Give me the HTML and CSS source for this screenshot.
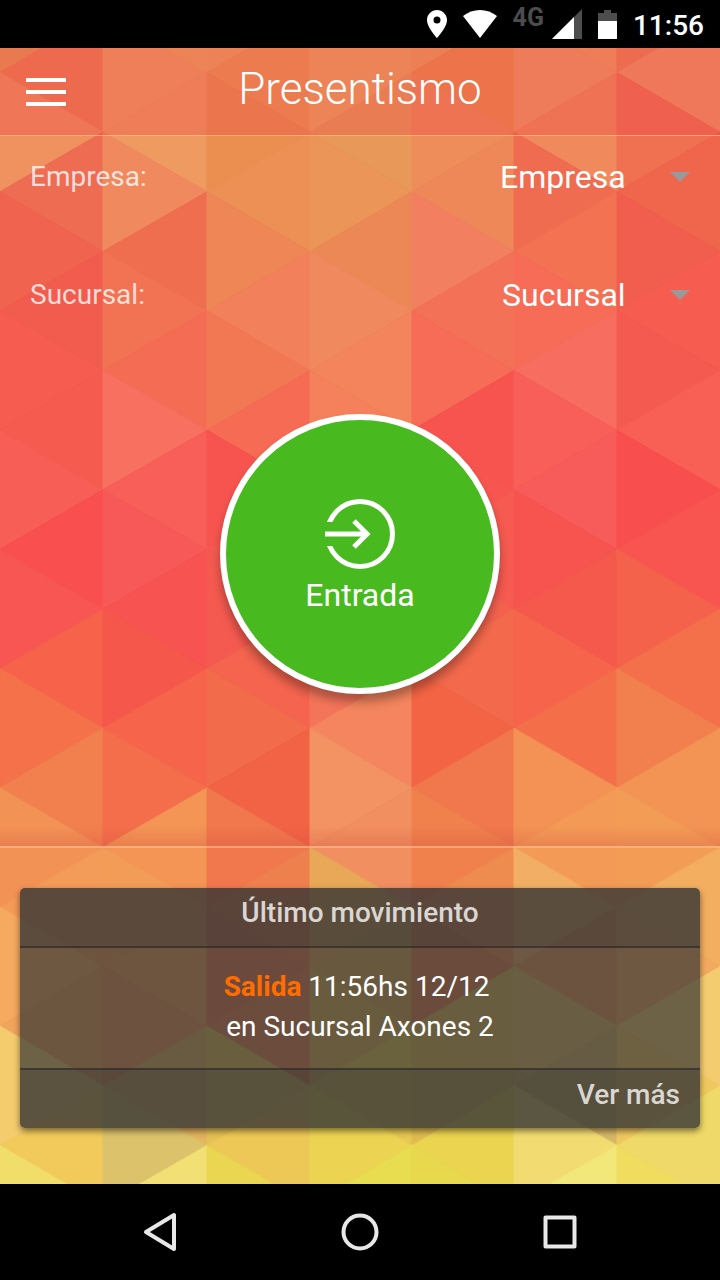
FILE: index.html
```html
<!DOCTYPE html>
<html lang="es">
<head>
  <meta charset="UTF-8">
  <meta name="viewport" content="width=device-width, initial-scale=1.0">
  <title>Presentismo</title>
  <link rel="stylesheet" href="styles.css">
</head>
<body>
  <div class="status-bar">
    <svg width="20" height="28" viewBox="0 0 20 28">
      <path fill="#fff" fill-rule="evenodd" d="M10 0C4.500 0 0 4.500 0 10c0 7.500 10 18 10 18s10-10.500 10-18C20 4.500 15.500 0 10 0zm0 6.500a3.500 3.500 0 1 1 0 7 3.500 3.500 0 0 1 0-7z"/>
    </svg>
    <svg width="34" height="28" viewBox="0 0 34 28">
      <path fill="#fff" d="M17 28L0 6C5 2 11 0 17 0s12 2 17 6z"/>
    </svg>
    <div class="signal">
      <span class="network">4G</span>
      <svg width="30" height="30" viewBox="0 0 30 30">
        <path fill="#4d4d4d" d="M30 0v30H0z"/>
        <path fill="#fff" d="M22 8v22H0z"/>
      </svg>
    </div>
    <svg width="19" height="29" viewBox="0 0 19 29">
      <path fill="#4d4d4d" d="M6 0h7v3h6v9H0V3h6z"/>
      <path fill="#fff" d="M0 11h19v18H0z"/>
    </svg>
    <span class="clock">11:56</span>
  </div>

  <div class="screen">
    <svg class="mosaic" id="mosaic" viewBox="0 48 720 1136" preserveAspectRatio="none" aria-hidden="true"></svg>

    <header class="toolbar">
      <button class="menu-btn" aria-label="Menú">
        <svg width="40" height="28" viewBox="0 0 40 28">
          <path fill="#fff" d="M0 0h40v4H0zM0 12h40v4H0zM0 24h40v4H0z"/>
        </svg>
      </button>
      <h1>Presentismo</h1>
    </header>

    <main class="content">
      <div class="fields">
        <div class="field">
          <label for="empresa">Empresa:</label>
          <div class="picker">
            <select id="empresa"><option>Empresa</option></select>
            <span class="arrow"></span>
          </div>
        </div>
        <div class="field">
          <label for="sucursal">Sucursal:</label>
          <div class="picker">
            <select id="sucursal"><option>Sucursal</option></select>
            <span class="arrow"></span>
          </div>
        </div>
      </div>

      <button class="entry-btn">
        <svg width="70" height="70" viewBox="0 0 70 70" fill="none" stroke="#fff" stroke-width="5">
          <clipPath id="ring"><path d="M0 0h70v70H0V47h14V23H0z"/></clipPath>
          <circle cx="35" cy="35" r="32.500" clip-path="url(#ring)"/>
          <path d="M0 35h42M29 22l13 13-13 13"/>
        </svg>
        <span>Entrada</span>
      </button>
    </main>

    <section class="bottom">
      <div class="card">
        <h2 class="card-title">Último movimiento</h2>
        <p class="card-body"><strong>Salida</strong> 11:56hs 12/12&nbsp;<br>en Sucursal Axones 2</p>
        <div class="card-footer"><a href="#">Ver más</a></div>
      </div>
    </section>
  </div>

  <nav class="nav-bar">
    <button aria-label="Atrás">
      <svg width="40" height="40" viewBox="0 0 40 40" fill="none" stroke="#e8e8e8" stroke-width="4" stroke-linejoin="round">
        <path d="M34 3v34L6 20z"/>
      </svg>
    </button>
    <button aria-label="Inicio">
      <svg width="40" height="40" viewBox="0 0 40 40" fill="none" stroke="#e8e8e8" stroke-width="4">
        <circle cx="20" cy="20" r="16.500"/>
      </svg>
    </button>
    <button aria-label="Recientes">
      <svg width="40" height="40" viewBox="0 0 40 40" fill="none" stroke="#e8e8e8" stroke-width="4" stroke-linejoin="round">
        <path d="M5.500 5.500h29v29h-29z"/>
      </svg>
    </button>
  </nav>

  <script src="mosaic.js"></script>
</body>
</html>
```

FILE: styles.css
```css
* {
  box-sizing: border-box;
}
body {
  margin: 0;
  min-height: 100vh;
  display: flex;
  flex-direction: column;
  font-family: Roboto, "Noto Sans", sans-serif;
  color: #fff;
  background: #000;
}
button {
  border: none;
  padding: 0;
  background: none;
  color: inherit;
  font-family: inherit;
  cursor: pointer;
}
svg {
  display: block;
}

/* status bar */
.status-bar {
  height: 48px;
  display: flex;
  align-items: center;
  justify-content: flex-end;
  gap: 16px;
  padding: 0 16px;
}
.signal {
  display: flex;
  align-items: center;
  gap: 8px;
}
.network {
  align-self: flex-start;
  font-size: 25px;
  line-height: 18px;
  font-weight: 700;
  color: #4d4d4d;
}
.clock {
  padding-top: 3px;
  font-size: 28px;
  line-height: 45px;
  font-weight: 500;
}

/* screen */
.screen {
  flex: 1;
  display: flex;
  flex-direction: column;
  position: relative;
  z-index: 0;
}
.mosaic {
  position: absolute;
  top: 0;
  left: 0;
  width: 100%;
  height: 100%;
  z-index: -1;
}
.toolbar {
  height: 88px;
  display: grid;
  grid-template-columns: 92px 1fr 92px;
  background: rgba(240, 61, 70, 0.3);
  border-bottom: 1px solid rgba(255, 210, 140, 0.6);
}
.menu-btn {
  display: flex;
  align-items: center;
  padding-left: 26px;
}
h1 {
  margin: 0;
  font-size: 44px;
  line-height: 82px;
  font-weight: 300;
  text-align: center;
}
.content {
  flex: 1;
  display: flex;
  flex-direction: column;
  align-items: center;
  background: linear-gradient(to top, rgba(200, 70, 60, 0.25), rgba(200, 70, 60, 0) 20px);
}
.fields {
  align-self: stretch;
  display: flex;
  flex-direction: column;
  gap: 36px;
  padding: 0 30px;
}
.field {
  height: 82px;
  display: flex;
  align-items: center;
  justify-content: space-between;
}
label {
  padding-bottom: 2px;
  font-size: 28px;
  color: rgba(255, 255, 255, 0.78);
}
.picker {
  display: grid;
  align-items: center;
}
.picker select, .arrow {
  grid-area: 1 / 1;
}
.picker select {
  appearance: none;
  border: none;
  background: none;
  color: #fff;
  font-family: inherit;
  font-size: 32px;
  line-height: 48px;
  padding: 0 64px 0 0;
}
.picker option {
  color: #333;
}
.arrow {
  justify-self: end;
  border: 10px solid transparent;
  border-top-color: #999;
  border-bottom: none;
  pointer-events: none;
}
.entry-btn {
  width: 280px;
  height: 280px;
  margin: 78px 0;
  padding-top: 4px;
  display: flex;
  flex-direction: column;
  align-items: center;
  justify-content: center;
  gap: 8px;
  border: 6px solid #fff;
  border-radius: 50%;
  background: #48ba20;
  font-size: 32px;
  line-height: 36px;
  box-shadow: 0 8px 10px rgba(0, 0, 0, 0.3);
}

/* last movement */
.bottom {
  padding: 40px 20px 56px;
  border-top: 2px solid rgba(255, 190, 150, 0.6);
}
.card {
  border-radius: 5px;
  overflow: hidden;
  text-align: center;
  font-size: 28px;
  box-shadow: 0 3px 6px rgba(0, 0, 0, 0.5);
}
.card-title, .card-footer {
  margin: 0;
  padding: 0 20px 8px;
  line-height: 50px;
  font-size: 28px;
  font-weight: 500;
  color: #dad6d2;
  background: rgba(52, 52, 52, 0.8);
}
.card-body {
  margin: 0;
  padding: 19px 20px 21px;
  line-height: 40px;
  background: rgba(52, 52, 52, 0.7);
  background-clip: padding-box;
  border: solid rgba(45, 45, 42, 0.92);
  border-width: 2px 0;
}
.card-body strong {
  color: #ff6d00;
}
.card-footer {
  text-align: right;
}
.card-footer a {
  color: inherit;
  text-decoration: none;
}

/* android navigation */
.nav-bar {
  height: 96px;
  display: grid;
  grid-template-columns: repeat(3, 1fr);
  padding: 0 60px;
}
.nav-bar button {
  display: flex;
  align-items: center;
  justify-content: center;
}
```

FILE: mosaic.js
```js
// one row per triangle level, one colour per column
const rows = [
  "e79654 eda460 eca15d eda461 eb9d59 ee9a60 ed8154",
  "ed7f54 f09d60 eb9754 eda460 eb8c4c ee9763 ef9263",
  "f09160 ee9a60 ea8f50 e8995a ee8c5a f08a5c f07052",
  "ee6c52 f08a5e ec9056 eb9558 ee8858 f06c50 f0664c",
  "f0634e ef6e50 ee8656 ec8856 f28060 f27252 f15e4e",
  "f25c4e f27353 f2805a f1895f f37257 f66c56 f65c50",
  "f75c50 f56c55 f27854 f3845c f66c56 f76e60 f55a50",
  "f65b4f f77060 f66b54 f5805c f7544f f85f58 f86055",
  "f75e56 f85f59 f7544f f96a56 f75650 f75c5a f84f4e",
  "f94f4e f75959 f75a50 f8624f f65a50 f75450 f85550",
  "f75652 f75350 f55a50 f4684f f4624f f5594b f5624b",
  "f6624a f6574b f4644e f4745a f3694c f5644b f4704a",
  "f5714a f5644b f26b4a f4855e f26444 f46e4a f2804e",
  "f2804e f46e4b f26244 f39262 f0784c f39254 f39354",
  "f39255 f49455 f1774d f28f60 f0804c f39a56 f39c56",
  "f39b58 f39c58 ee804e e9a858 ee8c50 f2ae64 f3ae60",
  "f5aa60 f3a05c ec7850 e0ac54 ec844e ee9c58 f3aa60",
  "f0a45c ee9858 ea8452 e0b456 e0bc56 e4c064 f4cc70",
  "f4cc6e e4b45e e4c056 e6c852 e0bc50 d8b866 f0c860",
  "f2ca5c dcc26a eec857 ecd452 ead450 f2dc72 efd968",
  "f0dd6a f2e074 ead650 e8dc50 e8d84e f2e87a f0dd60"
];

const colX = [0, 103, 207, 310, 412, 514, 617, 720];
const levelY = level => 13 + 59.6 * level;

let shapes = "";
rows.forEach((row, level) => {
  row.split(" ").forEach((color, col) => {
    // the tip points to the side whose grid line has a vertex at this level
    const tipLeft = (level + col) % 2 === 1;
    const tip = tipLeft ? colX[col] : colX[col + 1];
    const base = tipLeft ? colX[col + 1] : colX[col];
    shapes += `<polygon points="${tip},${levelY(level)} ${base},${levelY(level - 1)} ${base},${levelY(level + 1)}" fill="#${color}" stroke="#${color}"/>`;
  });
});
document.getElementById("mosaic").innerHTML = shapes;
```
